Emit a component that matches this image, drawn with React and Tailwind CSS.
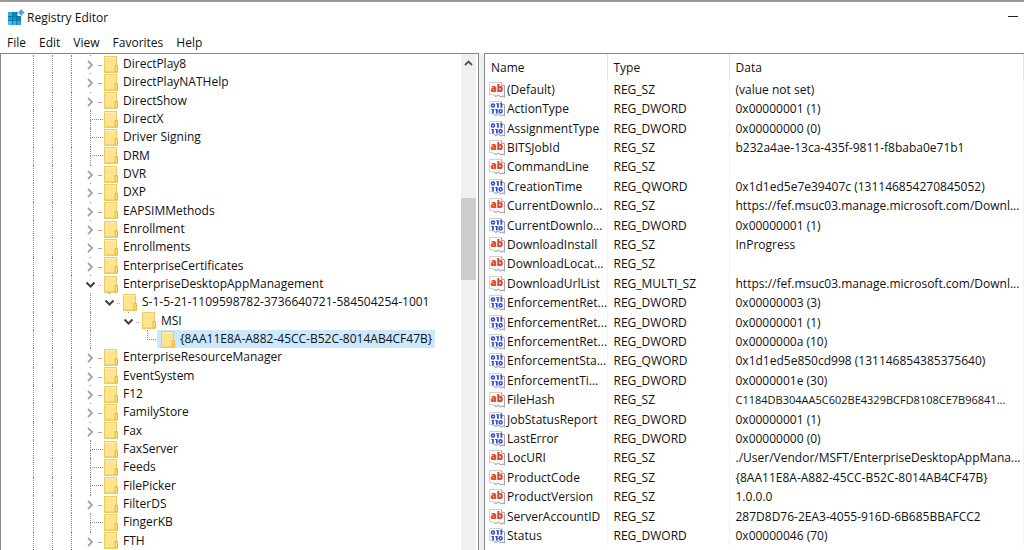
import { useState } from "react";

const TREE = [
  { name: "DirectPlay8", kind: "closed" },
  { name: "DirectPlayNATHelp", kind: "closed" },
  { name: "DirectShow", kind: "closed" },
  { name: "DirectX", kind: "leaf" },
  { name: "Driver Signing", kind: "leaf" },
  { name: "DRM", kind: "leaf" },
  { name: "DVR", kind: "closed" },
  { name: "DXP", kind: "closed" },
  { name: "EAPSIMMethods", kind: "closed" },
  { name: "Enrollment", kind: "closed" },
  { name: "Enrollments", kind: "closed" },
  { name: "EnterpriseCertificates", kind: "closed" },
  { name: "EnterpriseDesktopAppManagement", kind: "open" },
  { name: "S-1-5-21-1109598782-3736640721-584504254-1001", kind: "open", guides: [true] },
  { name: "MSI", kind: "open", guides: [true, false] },
  { name: "{8AA11E8A-A882-45CC-B52C-8014AB4CF47B}", kind: "last", guides: [true, false, false] },
  { name: "EnterpriseResourceManager", kind: "closed" },
  { name: "EventSystem", kind: "closed" },
  { name: "F12", kind: "closed" },
  { name: "FamilyStore", kind: "closed" },
  { name: "Fax", kind: "closed" },
  { name: "FaxServer", kind: "leaf" },
  { name: "Feeds", kind: "leaf" },
  { name: "FilePicker", kind: "leaf" },
  { name: "FilterDS", kind: "closed" },
  { name: "FingerKB", kind: "leaf" },
  { name: "FTH", kind: "closed" },
];

const VALUES = [
  ["(Default)", "REG_SZ", "(value not set)"],
  ["ActionType", "REG_DWORD", "0x00000001 (1)"],
  ["AssignmentType", "REG_DWORD", "0x00000000 (0)"],
  ["BITSJobId", "REG_SZ", "b232a4ae-13ca-435f-9811-f8baba0e71b1"],
  ["CommandLine", "REG_SZ", ""],
  ["CreationTime", "REG_QWORD", "0x1d1ed5e7e39407c (131146854270845052)"],
  ["CurrentDownlo...", "REG_SZ", "https://fef.msuc03.manage.microsoft.com/Downl..."],
  ["CurrentDownlo...", "REG_DWORD", "0x00000001 (1)"],
  ["DownloadInstall", "REG_SZ", "InProgress"],
  ["DownloadLocat...", "REG_SZ", ""],
  ["DownloadUrlList", "REG_MULTI_SZ", "https://fef.msuc03.manage.microsoft.com/Downl..."],
  ["EnforcementRet...", "REG_DWORD", "0x00000003 (3)"],
  ["EnforcementRet...", "REG_DWORD", "0x00000001 (1)"],
  ["EnforcementRet...", "REG_DWORD", "0x0000000a (10)"],
  ["EnforcementSta...", "REG_QWORD", "0x1d1ed5e850cd998 (131146854385375640)"],
  ["EnforcementTi...", "REG_DWORD", "0x0000001e (30)"],
  ["FileHash", "REG_SZ", "C1184DB304AA5C602BE4329BCFD8108CE7B96841..."],
  ["JobStatusReport", "REG_DWORD", "0x00000001 (1)"],
  ["LastError", "REG_DWORD", "0x00000000 (0)"],
  ["LocURI", "REG_SZ", "./User/Vendor/MSFT/EnterpriseDesktopAppMana..."],
  ["ProductCode", "REG_SZ", "{8AA11E8A-A882-45CC-B52C-8014AB4CF47B}"],
  ["ProductVersion", "REG_SZ", "1.0.0.0"],
  ["ServerAccountID", "REG_SZ", "287D8D76-2EA3-4055-916D-6B685BBAFCC2"],
  ["Status", "REG_DWORD", "0x00000046 (70)"],
];

// Unbroken hex digests are the widest values, so they are set one size smaller.
const isDigest = (data) => /^[0-9A-F]{40}/.test(data);

function AppIcon() {
  return (
    <svg width="18" height="18" viewBox="0 0 18 18" aria-hidden="true">
      <rect x="1" y="3" width="13" height="13" fill="#0f86bd" />
      <rect x="1" y="3" width="4" height="4" fill="#35b2e4" />
      <rect x="1" y="8" width="4" height="4" fill="#1e9dd2" />
      <rect x="6" y="8" width="4" height="4" fill="#1592c8" />
      <rect x="1" y="12" width="4" height="4" fill="#3cc3f2" />
      <rect x="6" y="12" width="4" height="4" fill="#30b6e8" />
      <rect x="10" y="12" width="4" height="4" fill="#27a9dc" />
      <path d="M5.5 3v13M9.5 3v13M1 7.5h13M1 11.5h13" stroke="#0a6e9f" strokeWidth="0.7" />
      <path d="M10.5 2.5h4v4.5h-4z" fill="#ffffff" />
      <path d="M14.2 0.6l2.9 2.9-2.9 2.9-2.9-2.9z" fill="#4ba9d8" stroke="#2f8dbd" strokeWidth="0.6" />
    </svg>
  );
}

function Folder() {
  return (
    <svg className="shrink-0" width="14" height="17" viewBox="0 0 14 17" aria-hidden="true">
      <rect x="0.5" y="0.5" width="12" height="15.5" fill="#ffe38f" stroke="#f0cc60" />
      <path d="M1 1.5h11" stroke="#fff0b8" />
      <path d="M11 9.5h2.5v6.5h-2.5z" fill="#ffdc70" stroke="#e6b93c" />
      <path d="M0 16.3h13.5" stroke="#ecc450" />
    </svg>
  );
}

function Toggle({ open, label }) {
  return (
    <button type="button" aria-label={(open ? "Collapse " : "Expand ") + label} className="flex w-[22px] shrink-0">
      <svg width="22" height="18" viewBox="0 0 22 18" fill="none" aria-hidden="true">
        <path d="M9 0.5h1" stroke="#8a8a8a" />
        {open ? (
          <path d="M5.5 7.5l4 4 4-4" stroke="#404040" strokeWidth="2" />
        ) : (
          <path d="M7 6l4 4-4 4" stroke="#a6a6a6" strokeWidth="1.9" />
        )}
        <path d="M17 10.5h4" stroke="#a8a8a8" strokeDasharray={open ? "1 1" : "4 0"} />
      </svg>
    </button>
  );
}

function Branch({ last }) {
  return (
    <span className="flex w-[22px] shrink-0 flex-col self-stretch pl-[9px]" aria-hidden="true">
      <span className="flex-1 border-b border-l border-dotted border-[#8a8a8a]" />
      {last ? (
        <span className="flex-1" />
      ) : (
        <span className="flex-1 border-l border-dotted border-[#8a8a8a]" />
      )}
    </span>
  );
}

function Guide({ visible }) {
  return (
    <span className="flex w-[19px] shrink-0 self-stretch pl-[9px]" aria-hidden="true">
      {visible && <span className="border-l border-dotted border-[#8a8a8a]" />}
    </span>
  );
}

function TreeRow({ item, selected, onSelect }) {
  const guides = [true, true, true, ...(item.guides || [])];
  return (
    <li className="flex items-center">
      {guides.map((visible, i) => (
        <Guide key={i} visible={visible} />
      ))}
      {item.kind === "leaf" || item.kind === "last" ? (
        <Branch last={item.kind === "last"} />
      ) : (
        <Toggle open={item.kind === "open"} label={item.name} />
      )}
      <button
        type="button"
        onClick={onSelect}
        className={
          "-ml-[3px] flex items-center gap-[5px] self-stretch whitespace-nowrap pl-1 pr-[3px] leading-[18px] " +
          (selected ? "bg-[#cce8ff]" : "")
        }
      >
        <Folder />
        {item.name}
      </button>
    </li>
  );
}

function ValueIcon({ type }) {
  const isText = type.endsWith("SZ");
  return (
    <svg className="shrink-0" width="17" height="16" viewBox="0 0 17 16" aria-hidden="true">
      <path
        d="M0.5 0.5h12l3 3v11.5l-1.5-1-2.5 1-2-2-2.5 1.5-2.5-1.5-2.5-0.5-1.5 0.5z"
        fill="#fbfbfb"
        stroke="#d0d0d0"
      />
      <path d="M15.5 4v11l-1.5-1-2.5 1-2-2-2.5 1.5-2-1.2" fill="none" stroke="#a4a4a4" />
      <path d="M12.5 0.5v3h3" fill="#ffffff" stroke="#a4a4a4" />
      {isText ? (
        <text x="1.5" y="10" fontFamily="Open Sans, sans-serif" fontSize="10" fontWeight="800" fill="#dc4423">
          ab
        </text>
      ) : (
        <g fill="none" stroke="#2a48dc" strokeWidth="1.5">
          <ellipse cx="4" cy="4.5" rx="1.5" ry="1.6" />
          <path d="M8.9 2.2v4.6M12.4 2.2v4.6M4 8v4.6M7.8 8v4.6" strokeWidth="1.7" />
          <ellipse cx="11.6" cy="10.3" rx="1.5" ry="1.6" />
          <path d="M7.2 2.7h1.2M10.8 2.7h1.2M2.4 8.5h1.2M6.2 8.5h1.2" strokeWidth="1" />
        </g>
      )}
    </svg>
  );
}

export default function App() {
  const [selected, setSelected] = useState(15);
  return (
    <div className="flex min-h-screen flex-col bg-white font-['Open_Sans',sans-serif] text-[12px] text-[#111111]">
      <header className="flex flex-col border-t-2 border-[#9a9a9a]">
        <div className="flex h-8 items-center justify-between pl-[7px] pr-[5px]">
          <h1 className="flex items-center gap-[2px] font-normal">
            <AppIcon />
            Registry Editor
          </h1>
          <button type="button" aria-label="Minimize" className="flex">
            <svg width="11" height="11" viewBox="0 0 11 11" aria-hidden="true">
              <path d="M0 3.5h10" stroke="#202020" />
            </svg>
          </button>
        </div>
        <nav className="flex h-[19px] items-center gap-[13px] pb-[2px] pl-[7px]">
          {["File", "Edit", "View", "Favorites", "Help"].map((label) => (
            <button key={label} type="button">
              {label}
            </button>
          ))}
        </nav>
      </header>
      <main className="flex flex-1 gap-[5px] bg-[#f0f0f0]">
        <section className="flex w-[479px] shrink-0 border border-b-0 border-[#828790] bg-white" aria-label="Keys">
          <ul className="grid min-w-0 flex-1 auto-rows-fr pl-[23px] pt-px">
            {TREE.map((item, i) => (
              <TreeRow key={item.name} item={item} selected={selected === i} onSelect={() => setSelected(i)} />
            ))}
          </ul>
          <div className="mr-[2px] flex w-[15px] flex-col bg-[#f0f0f0]">
            <button type="button" aria-label="Scroll up" className="flex h-[18px] items-center justify-center">
              <svg width="9" height="6" viewBox="0 0 9 6" aria-hidden="true">
                <path d="M1 5l3.5-3.5L8 5" fill="none" stroke="#505050" strokeWidth="1.8" />
              </svg>
            </button>
            <div className="mt-[126px] h-[82px] bg-[#cdcdcd]" />
          </div>
        </section>
        <section className="flex min-w-0 flex-1 flex-col border-l border-t border-[#828790] bg-white pb-1" aria-label="Values">
          <table className="w-full flex-1 table-fixed border-collapse text-left leading-[18px]">
            <colgroup>
              <col className="w-[122px]" />
              <col className="w-[122px]" />
              <col />
            </colgroup>
            <thead>
              <tr className="h-[26px]">
                <th className="border-r border-[#e2e2e2] p-0 pl-[6px] pt-px font-normal">Name</th>
                <th className="border-r border-[#e2e2e2] p-0 pl-[6px] pt-px font-normal">Type</th>
                <th className="border-r border-[#e2e2e2] p-0 pl-[6px] pt-px font-normal">Data</th>
              </tr>
            </thead>
            <tbody>
              {VALUES.map(([name, type, data], i) => (
                <tr key={i}>
                  <td className="border-r border-[#edf4fb] p-0 pl-1">
                    <span className="flex items-center gap-px whitespace-nowrap">
                      <ValueIcon type={type} />
                      {name}
                    </span>
                  </td>
                  <td className="whitespace-nowrap border-r border-[#edf4fb] p-0 pl-[6px]">{type}</td>
                  <td
                    className={
                      "whitespace-nowrap border-r border-[#edf4fb] p-0 pl-[6px] " + (isDigest(data) ? "text-[11px]" : "")
                    }
                  >
                    {data}
                  </td>
                </tr>
              ))}
            </tbody>
          </table>
        </section>
      </main>
    </div>
  );
}
